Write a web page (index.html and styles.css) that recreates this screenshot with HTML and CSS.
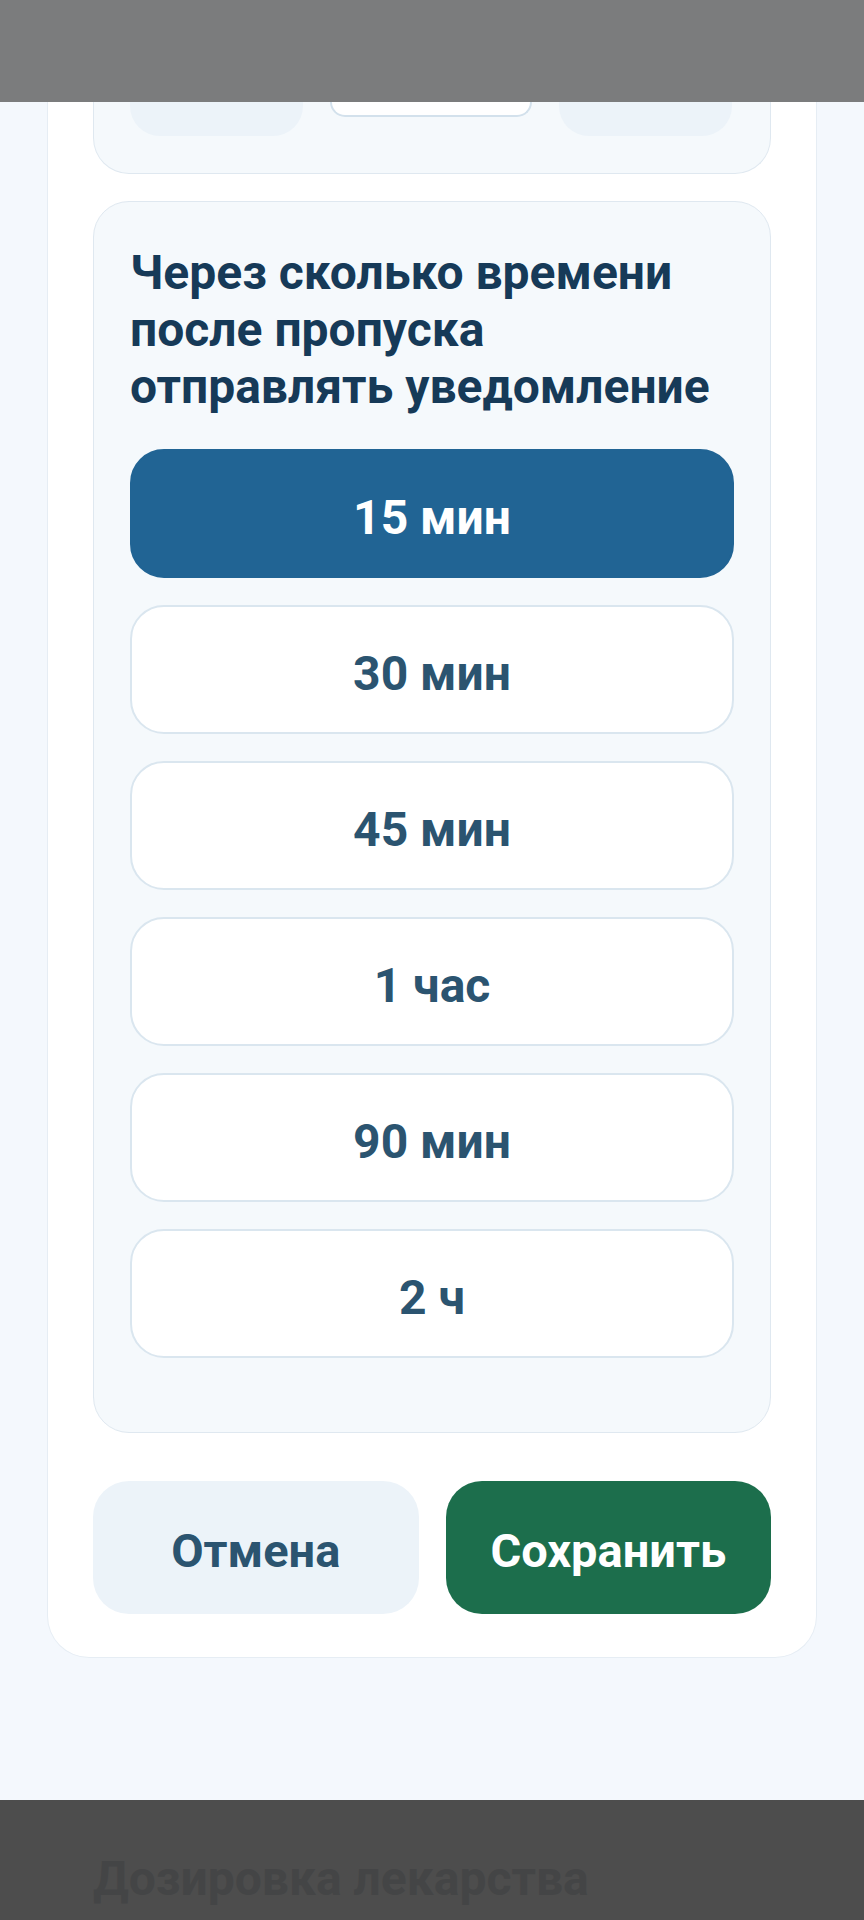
FILE: index.html
```html
<!DOCTYPE html>
<html lang="ru">
<head>
    <meta charset="UTF-8">
    <meta name="viewport" content="width=device-width, initial-scale=1.0">
    <title>Уведомление о пропуске</title>
    <link rel="stylesheet" href="styles.css">
</head>
<body>
    <div class="statusbar"></div>

    <div class="screen">
        <div class="sheet">
            <div class="section section-cut">
                <div class="pills">
                    <div class="pill"></div>
                    <div class="pill pill-active"></div>
                    <div class="pill"></div>
                </div>
            </div>

            <div class="section">
                <h2 class="section-title">Через сколько времени после пропуска отправлять уведомление</h2>
                <div class="options">
                    <button class="option selected">15 мин</button>
                    <button class="option">30 мин</button>
                    <button class="option">45 мин</button>
                    <button class="option">1 час</button>
                    <button class="option">90 мин</button>
                    <button class="option">2 ч</button>
                </div>
            </div>

            <div class="actions">
                <button class="btn btn-cancel">Отмена</button>
                <button class="btn btn-save">Сохранить</button>
            </div>
        </div>
    </div>

    <div class="backdrop">
        <div class="backdrop-title">Дозировка лекарства</div>
    </div>
</body>
</html>
```

FILE: styles.css
```css
* {
    box-sizing: border-box;
}
body {
    margin: 0;
    width: 864px;
    height: 1920px;
    overflow: hidden;
    font-family: Roboto, "Liberation Sans", sans-serif;
    background: #f4f8fd;
    display: flex;
    flex-direction: column;
}
.statusbar {
    height: 102px;
    background: #7b7c7d;
    flex-shrink: 0;
}
.screen {
    height: 1698px;
    flex-shrink: 0;
    overflow: hidden;
}
.sheet {
    margin: 0 47px;
    background: #fff;
    border: 1px solid #e6edf4;
    border-top: none;
    border-radius: 0 0 42px 42px;
    padding: 0 45px 43px;
}
.section {
    background: #f5f9fc;
    border: 1px solid #dfe8f0;
    border-radius: 36px;
    padding: 42px 36px 74px;
    margin-top: 27px;
}
.section-cut {
    margin-top: 0;
    border-top: none;
    border-radius: 0 0 36px 36px;
    padding: 0 36px 37px;
}
.pills {
    display: flex;
    gap: 27px;
    align-items: flex-start;
}
.pill {
    width: 173px;
    height: 34px;
    background: #ecf3f9;
    border-radius: 0 0 30px 30px;
}
.pill-active {
    width: 202px;
    height: 15px;
    background: #fff;
    border: 2px solid #d3e1ec;
    border-top: none;
}
.section-title {
    margin: 0 0 34px;
    font-size: 48px;
    line-height: 57px;
    font-weight: 700;
    color: #163a58;
}
.options {
    display: flex;
    flex-direction: column;
    gap: 27px;
}
.option {
    height: 129px;
    border: 2px solid #dae6ef;
    border-radius: 34px;
    background: #fff;
    color: #2b5470;
    font-family: inherit;
    font-size: 48px;
    font-weight: 700;
    padding: 8px 0 0;
    cursor: pointer;
}
.option.selected {
    background: #216494;
    border-color: #216494;
    color: #fff;
}
.actions {
    display: flex;
    gap: 27px;
    margin-top: 48px;
}
.btn {
    flex: 1;
    height: 133px;
    border: none;
    border-radius: 36px;
    font-family: inherit;
    font-size: 47px;
    font-weight: 700;
    padding: 6px 0 0;
    cursor: pointer;
}
.btn-cancel {
    background: #ecf3f9;
    color: #2b5470;
}
.btn-save {
    background: #1c6e4c;
    color: #fff;
}
.backdrop {
    flex: 1;
    background: #4d4d4d;
    padding: 50px 93px 0;
}
.backdrop-title {
    font-size: 48px;
    font-weight: 700;
    color: #444546;
}
```
